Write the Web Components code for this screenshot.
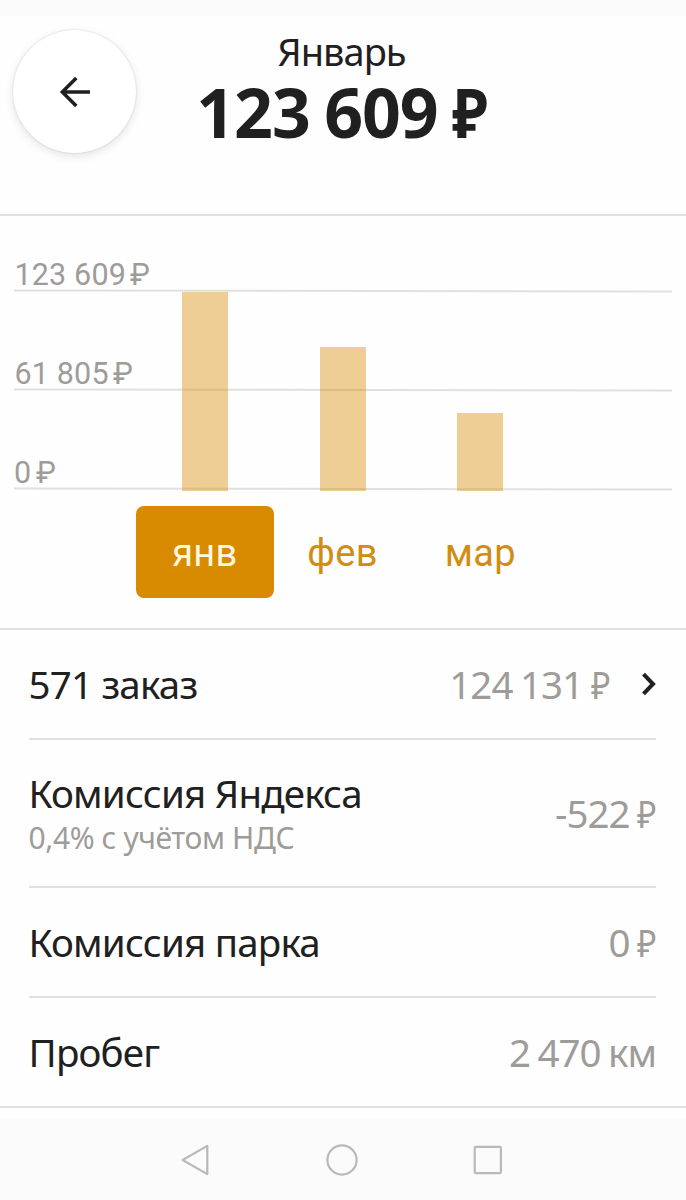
<!DOCTYPE html>
<html lang="ru">
<head>
<meta charset="utf-8">
<title>Январь</title>
<style>
    body {
        margin: 0;
        background: #fefefe;
        color: #212020;
        font-family: "Noto Sans", sans-serif;
        --ui-color-line: #e0e0de;
        --ui-color-muted: #9e9c99;
        --ui-color-accent: #d88a00;
    }
</style>
</head>
<body>
<income-page></income-page>

<script>
class BaseElement extends HTMLElement {
    connectedCallback() {
        if (this.shadowRoot) return;
        const template = document.createElement('template');
        template.innerHTML = this.render();
        this.attachShadow({ mode: 'open' });
        this.shadowRoot.append(template.content);
    }
}

// Number with a narrow rouble sign after it
class MoneyAmount extends BaseElement {
    render() {
        return `
            <style>
                :host {
                    display: inline-flex;
                    white-space: nowrap;
                }
                .sign {
                    width: var(--sign-width, 19px);
                    margin-left: var(--sign-gap, 7.5px);
                    letter-spacing: 0;
                    transform: scaleX(var(--sign-scale, 0.87));
                    transform-origin: 0 50%;
                }
            </style>
            <span><slot></slot></span>
            <span class="sign">₽</span>
        `;
    }
}

class BackButton extends BaseElement {
    render() {
        return `
            <style>
                :host {
                    display: block;
                }
                button {
                    display: grid;
                    place-items: center;
                    width: 123px;
                    height: 123px;
                    padding: 0;
                    border: 0;
                    border-radius: 50%;
                    background: #fff;
                    box-shadow: 0 0 2px rgba(0,0,0,0.16), 0 3px 10px rgba(0,0,0,0.11);
                }
            </style>
            <button aria-label="Назад">
                <svg width="32" height="32" viewBox="0 0 32 32" fill="none" stroke="#212020" stroke-width="3.5">
                    <path d="M31 16H3M17.3 2 3.3 16l14 14" />
                </svg>
            </button>
        `;
    }
}

class PageHeader extends BaseElement {
    render() {
        return `
            <style>
                :host {
                    display: grid;
                    grid-template-columns: 1fr auto 1fr;
                    box-sizing: border-box;
                    height: 216px;
                    border-bottom: 2px solid var(--ui-color-line);
                    background: linear-gradient(#fbfbfb 16px, transparent 16px);
                }
                back-button {
                    margin: 30px 0 0 13px;
                }
                .title {
                    padding: 29px 3px 0 0;
                    text-align: center;
                }
                .month {
                    font-size: 38px;
                    line-height: 44px;
                    letter-spacing: -1px;
                }
                .total {
                    --sign-width: 35px;
                    --sign-gap: 14px;
                    --sign-scale: 0.875;
                    margin-top: 3px;
                    font-size: 68px;
                    font-weight: 700;
                    line-height: 72px;
                    letter-spacing: -1.1px;
                    word-spacing: -2px;
                }
            </style>
            <back-button></back-button>
            <div class="title">
                <div class="month"><slot name="month"></slot></div>
                <div class="total"><slot name="total"></slot></div>
            </div>
        `;
    }
}

class IncomeChart extends BaseElement {
    render() {
        const scale = ['123 609', '61 805', '0'];
        const months = [
            { name: 'янв', height: 198.5, active: true },
            { name: 'фев', height: 144 },
            { name: 'мар', height: 77.5 },
        ];

        return `
            <style>
                :host {
                    display: block;
                    box-sizing: border-box;
                    height: 414px;
                    border-bottom: 2px solid var(--ui-color-line);
                    font-family: Roboto, sans-serif;
                }
                .plot {
                    display: grid;
                    height: 274.5px;
                }
                .scale, .bars {
                    grid-area: 1 / 1;
                }
                .scale {
                    display: grid;
                    grid-template-rows: 76px 99px 99px;
                    margin: 0 14.5px 0 13.5px;
                }
                .mark {
                    --sign-gap: 4.5px;
                    --sign-scale: 0.98;
                    display: flex;
                    flex-direction: column;
                    justify-content: flex-end;
                    color: var(--ui-color-muted);
                    font-size: 30.5px;
                    line-height: 30px;
                    letter-spacing: 0.15px;
                }
                .mark money-amount {
                    padding-left: 1px;
                }
                .mark:last-child money-amount {
                    padding-left: 0.5px;
                }
                .line {
                    height: 2px;
                    background: var(--ui-color-line);
                    transform: rotate(0.1deg);
                }
                .bars, .tabs {
                    display: grid;
                    grid-template-columns: repeat(3, 137.7px);
                    margin-left: 136px;
                }
                .bars {
                    align-items: end;
                    justify-items: center;
                }
                .bar {
                    width: 46px;
                    background: var(--ui-color-accent);
                    opacity: 0.41;
                }
                .tabs {
                    margin-top: 15.5px;
                }
                .tab {
                    box-sizing: border-box;
                    height: 91.5px;
                    padding-top: 2px;
                    border-radius: 8px;
                    color: #d18d13;
                    font-size: 38px;
                    line-height: 91px;
                    letter-spacing: 0.3px;
                    text-align: center;
                }
                .tab.active {
                    background: var(--ui-color-accent);
                    color: #fff7df;
                }
            </style>
            <div class="plot">
                <div class="scale">
                    ${scale.map((value) => `
                        <div class="mark">
                            <money-amount>${value}</money-amount>
                            <div class="line"></div>
                        </div>
                    `).join('')}
                </div>
                <div class="bars">
                    ${months.map((m) => `<div class="bar" style="height: ${m.height}px"></div>`).join('')}
                </div>
            </div>
            <div class="tabs">
                ${months.map((m) => `<div class="tab ${m.active ? 'active' : ''}">${m.name}</div>`).join('')}
            </div>
        `;
    }
}

class DetailRow extends BaseElement {
    render() {
        const arrow = `
            <svg width="14" height="24" viewBox="0 0 14 24" fill="none" stroke="#212020" stroke-width="4">
                <path d="M1.5 2.2 11 12 1.5 21.8" />
            </svg>
        `;

        return `
            <style>
                :host {
                    display: flex;
                    align-items: center;
                    box-sizing: border-box;
                    height: 110px;
                    margin: 0 30px 0 28.5px;
                    border-bottom: 2px solid var(--ui-color-line);
                    font-size: 38.5px;
                    line-height: 44px;
                }
                :host([tall]) {
                    height: 148px;
                }
                :host([last]) {
                    margin: 0;
                    padding: 0 30px 0 28.5px;
                }
                .label {
                    flex: 1;
                    letter-spacing: -0.8px;
                }
                .value {
                    color: var(--ui-color-muted);
                    letter-spacing: -1px;
                    word-spacing: -1.5px;
                }
                svg {
                    margin-left: 32.5px;
                }
                ::slotted([slot="note"]) {
                    display: block;
                    margin-top: 5px;
                    color: var(--ui-color-muted);
                    font-size: 30px;
                    line-height: 36px;
                    letter-spacing: -0.4px;
                }
            </style>
            <div class="label"><slot></slot><slot name="note"></slot></div>
            <div class="value"><slot name="value"></slot></div>
            ${this.hasAttribute('arrow') ? arrow : ''}
        `;
    }
}

class SystemNav extends BaseElement {
    render() {
        return `
            <style>
                :host {
                    display: flex;
                    justify-content: center;
                    align-items: center;
                    gap: 113.5px;
                    height: 82px;
                    margin-top: 11px;
                    padding-right: 1.5px;
                    background: #fbfbfb;
                }
                svg {
                    fill: none;
                    stroke: #b9b9b9;
                    stroke-width: 2.2;
                    stroke-linejoin: round;
                }
            </style>
            <svg width="32" height="32" viewBox="0 0 32 32"><path d="M1.6 16 26.3 1.9v28.2z" /></svg>
            <svg width="32" height="32" viewBox="0 0 32 32"><circle cx="16" cy="16" r="14.6" /></svg>
            <svg width="32" height="32" viewBox="0 0 32 32"><rect x="2.7" y="2.9" width="26.2" height="26.2" rx="1" /></svg>
        `;
    }
}

class IncomePage extends BaseElement {
    render() {
        return `
            <style>
                :host {
                    display: block;
                    width: 686px;
                    height: 1200px;
                    overflow: hidden;
                }
            </style>
            <page-header>
                <span slot="month">Январь</span>
                <money-amount slot="total">123 609</money-amount>
            </page-header>
            <income-chart></income-chart>
            <detail-row arrow>571 заказ<money-amount slot="value">124 131</money-amount></detail-row>
            <detail-row tall>
                Комиссия Яндекса<span slot="note">0,4% с учётом НДС</span>
                <money-amount slot="value">-522</money-amount>
            </detail-row>
            <detail-row>Комиссия парка<money-amount slot="value">0</money-amount></detail-row>
            <detail-row last>Пробег<span slot="value">2 470 км</span></detail-row>
            <system-nav></system-nav>
        `;
    }
}

customElements.define('money-amount', MoneyAmount);
customElements.define('back-button', BackButton);
customElements.define('page-header', PageHeader);
customElements.define('income-chart', IncomeChart);
customElements.define('detail-row', DetailRow);
customElements.define('system-nav', SystemNav);
customElements.define('income-page', IncomePage);
</script>
</body>
</html>
